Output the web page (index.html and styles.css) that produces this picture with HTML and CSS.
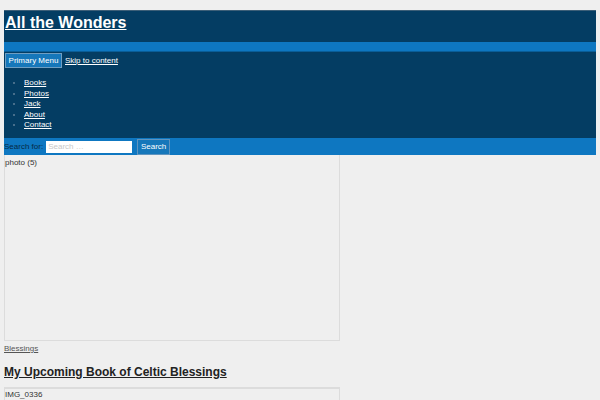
FILE: index.html
```html
<!DOCTYPE html>
<html lang="en">
<head>
<meta charset="utf-8">
<title>All the Wonders</title>
<link rel="stylesheet" href="styles.css">
</head>
<body>
<header class="site-header">
  <div class="branding">
    <a class="site-title" href="#">All the Wonders</a>
  </div>
  <div class="band"></div>
  <nav class="main-nav">
    <div class="nav-top">
      <button class="menu-toggle">Primary Menu</button>
      <a class="skip-link" href="#">Skip to content</a>
    </div>
    <ul class="menu">
      <li><a href="#">Books</a></li>
      <li><a href="#">Photos</a></li>
      <li><a href="#">Jack</a></li>
      <li><a href="#">About</a></li>
      <li><a href="#">Contact</a></li>
    </ul>
  </nav>
  <form class="search-bar">
    <label class="search-label">Search for:</label>
    <input class="search-input" type="search" placeholder="Search …">
    <button class="search-btn" type="button">Search</button>
  </form>
</header>
<main class="content">
  <div class="photo-box">photo (5)</div>
  <a class="cat-link" href="#">Blessings</a>
  <h2 class="entry-title"><a href="#">My Upcoming Book of Celtic Blessings</a></h2>
  <div class="photo-box second">IMG_0336</div>
</main>
</body>
</html>
```
FILE: styles.css
```css
html, body {
  margin: 0;
  padding: 0;
}
body {
  background: #efefef;
  font-family: "Liberation Sans", Arial, sans-serif;
  font-size: 8px;
  color: #333;
  padding: 10px 4px 0 4px;
  overflow: hidden;
  height: 390px;
}
.site-header {
  background: #043d63;
  border-top: 1px solid #3d5f78;
}
.branding {
  height: 31px;
  padding: 0 1px;
}
.site-title {
  display: inline-block;
  margin-top: 2px;
  color: #fff;
  font-size: 16px;
  font-weight: bold;
  line-height: 20px;
}
.band {
  height: 9px;
  background: #0e77c1;
  border-bottom: 1px solid #0a5e98;
}
.main-nav {
  padding: 1px 1px 0 1px;
  height: 85px;
}
.nav-top {
  display: flex;
  align-items: center;
  gap: 3px;
}
.menu-toggle {
  background: #1677ba;
  color: #fff;
  border: 1px solid #6f9ec2;
  font-family: "Liberation Sans", Arial, sans-serif;
  font-size: 8px;
  height: 15px;
  width: 57px;
  padding: 0;
  margin: 0;
}
.skip-link {
  color: #fff;
  font-size: 8px;
}
.menu {
  margin: 10px 0 0 0;
  padding-left: 19px;
  line-height: 10.5px;
  color: #5e7f98;
  font-size: 8px;
}
.menu a {
  color: #fff;
}
.search-bar {
  background: #0e77c1;
  height: 17px;
  display: flex;
  align-items: center;
  margin: 0;
}
.search-label {
  color: #062a45;
  font-size: 8px;
  margin-right: 3px;
}
.search-input {
  width: 86px;
  height: 12px;
  box-sizing: border-box;
  border: none;
  padding: 0 2px;
  font-family: "Liberation Sans", Arial, sans-serif;
  font-size: 8px;
  margin: 0 5px 0 0;
  background: #fff;
}
.search-input::placeholder {
  color: #c8c8c8;
}
.search-btn {
  background: #1677ba;
  color: #fff;
  border: 1px solid #5f94bf;
  font-family: "Liberation Sans", Arial, sans-serif;
  font-size: 8px;
  height: 16px;
  width: 33px;
  padding: 0;
  margin: 0;
}
.photo-box {
  width: 336px;
  height: 186px;
  box-sizing: border-box;
  border: 1px solid #dcdcdc;
  border-top: none;
  padding: 2px 0 0 0;
  color: #333;
  font-size: 8px;
  line-height: 11px;
}
.photo-box.second {
  border-top: 2px solid #dcdcdc;
  padding-top: 1px;
  line-height: 9px;
}
.cat-link {
  display: block;
  color: #555;
  font-size: 8px;
  margin-top: 3px;
  line-height: 10px;
}
.entry-title {
  margin: 11px 0 7px 0;
  font-size: 12px;
  line-height: 15px;
}
.entry-title a {
  color: #222;
}
```
